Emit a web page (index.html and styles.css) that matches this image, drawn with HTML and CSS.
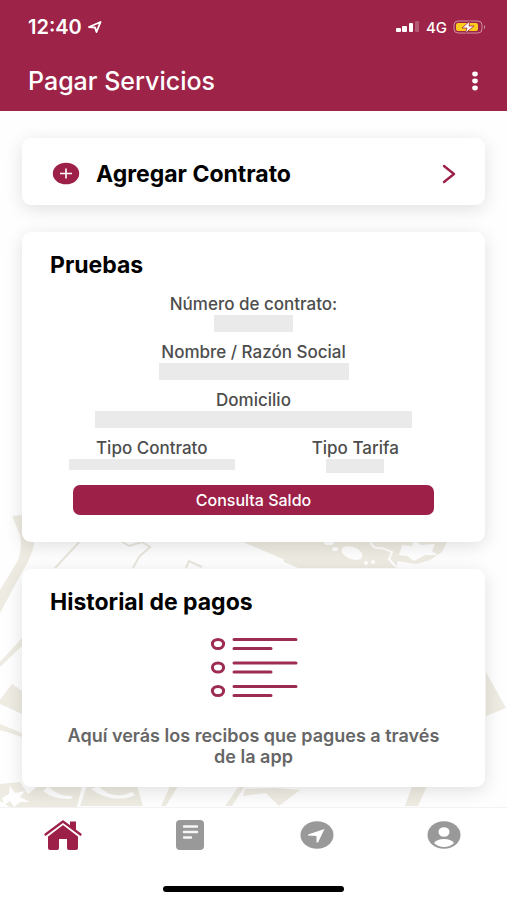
FILE: index.html
```html
<!DOCTYPE html>
<html lang="es">
  <head>
    <meta charset="utf-8">
    <meta name="viewport" content="width=device-width, initial-scale=1">
    <title>Pagar Servicios</title>
    <link rel="stylesheet" href="styles.css">
  </head>
  <body>
    <header class="header">
      <div class="status">
        <div class="status-side">
          <span class="time">12:40</span>
          <svg width="14" height="12" viewBox="0 0 14 12">
            <path d="M1 6 12.5 1 8.5 11 7 6.5Z" fill="none" stroke="#fff" stroke-width="1.9" stroke-linejoin="round"/>
          </svg>
        </div>
        <div class="status-side">
          <svg width="24" height="12" viewBox="0 0 24 12" fill="#fff">
            <rect x="0" y="7" width="5" height="4" rx="1"/>
            <rect x="6" y="5" width="5" height="6" rx="1"/>
            <rect x="13" y="2" width="4" height="9" rx="1"/>
            <rect x="19" y="0" width="4" height="11" rx="1" opacity=".25"/>
          </svg>
          <span class="network">4G</span>
          <svg width="34" height="14" viewBox="0 0 34 14">
            <rect x="1" y="1" width="28" height="12" rx="4" fill="none" stroke="#cf8fa3"/>
            <path d="M31 5q2.5 2 0 4Z" fill="#cf8fa3"/>
            <rect x="3" y="3" width="22" height="8" rx="2" fill="#fdcb1b"/>
            <path d="M17 1 9 8h5l-1.5 5L21 6h-5Z" fill="#fff" stroke="#9d2348" stroke-width=".8"/>
          </svg>
        </div>
      </div>
      <div class="title-bar">
        <h1>Pagar Servicios</h1>
        <button class="menu" type="button" aria-label="Menú">
          <svg width="8" height="20" viewBox="0 0 8 20" fill="#fff">
            <ellipse cx="4" cy="3" rx="2.8" ry="2.4"/>
            <ellipse cx="4" cy="10" rx="2.8" ry="2.4"/>
            <ellipse cx="4" cy="17" rx="2.8" ry="2.4"/>
          </svg>
        </button>
      </div>
    </header>

    <main class="main">
      <svg class="pattern" viewBox="0 0 507 293" preserveAspectRatio="none" aria-hidden="true">
        <g fill="#eeebe2">
          <path d="M12 2 22 1 34 22Q36 36 22 58L0 99V76L17 48Q23 36 20 21Z"/>
          <path d="M238 26H448L442 38 430 46 416 50 398 47 396 54H298L284 48 283 45Z"/>
          <path d="M0 148 22 124V132L0 153Z"/>
          <path d="M0 186 12 170 22 177V200L0 190ZM0 210 22 219V223L0 216Z"/>
          <path d="M486 158 506 194 486 202Z"/>
          <path d="M0 270 20 268 28 280 38 272H82L77 293H10L0 287ZM87 272H137L143 292H80ZM170 272H178L166 292H161ZM239 272H245L232 292H225ZM245 275 274 274 300 276 288 285 279 292 266 279 243 282ZM412 272H427L418 292H405Z"/>
        </g>
        <g fill="none" stroke="#e9e6dd" stroke-width="2">
          <path d="M81 26 70 38 55 54M121 27 129 32 142 28 150 33 139 43 133 54M186 54 189 47 202 53"/>
        </g>
        <g fill="#fff">
          <ellipse cx="352" cy="39" rx="11" ry="6" transform="rotate(20 352 39)"/>
          <ellipse cx="329" cy="29" rx="5" ry="2"/>
          <ellipse cx="335" cy="35" rx="3" ry="2"/>
          <circle cx="366" cy="49" r="2"/>
          <circle cx="373" cy="48" r="2"/>
          <path d="M402 31 412 32 414 26 421 31 435 30 432 37 438 41 425 41 414 47 407 42 399 41Z"/>
          <path d="M2 284 9 280 10 272 15 279 25 277 20 283 30 288 20 288 14 293 10 287 4 291Z"/>
          <path d="M48 272Q58 283 73 282L71 285Q54 286 43 277ZM98 272Q113 287 132 278L135 281Q113 291 91 275Z"/>
        </g>
        <path d="M370 26Q372 36 382 34L392 38 389 45 396 53" fill="none" stroke="#fff" stroke-width="2"/>
      </svg>

      <button class="card add" type="button">
        <svg width="28" height="23" viewBox="0 0 28 23">
          <ellipse cx="14" cy="11.5" rx="13.2" ry="10.8" fill="#9d2048"/>
          <path d="M8 11.5h12M14 6.5v10" stroke="#fff" stroke-width="1.6"/>
        </svg>
        <span class="heading">Agregar Contrato</span>
        <svg class="chevron" width="14" height="20" viewBox="0 0 14 20">
          <path d="m2 2 10 8-10 8" fill="none" stroke="#9d2048" stroke-width="2.4" stroke-linecap="round" stroke-linejoin="round"/>
        </svg>
      </button>

      <section class="card contract">
        <h2 class="heading">Pruebas</h2>
        <dl class="fields">
          <div class="field">
            <dt>Número de contrato:</dt>
            <dd class="mask number"></dd>
          </div>
          <div class="field">
            <dt>Nombre / Razón Social</dt>
            <dd class="mask name"></dd>
          </div>
          <div class="field">
            <dt>Domicilio</dt>
            <dd class="mask address"></dd>
          </div>
          <div class="field-row">
            <div class="field">
              <dt>Tipo Contrato</dt>
              <dd class="mask type"></dd>
            </div>
            <div class="field">
              <dt>Tipo Tarifa</dt>
              <dd class="mask rate"></dd>
            </div>
          </div>
        </dl>
        <button class="balance" type="button">Consulta Saldo</button>
      </section>

      <section class="card history">
        <h2 class="heading">Historial de pagos</h2>
        <svg class="list-icon" width="88" height="62" viewBox="0 0 88 62" fill="none" stroke="#9d2c52" stroke-width="3" stroke-linecap="round">
          <ellipse cx="8" cy="8" rx="5.6" ry="4.6"/>
          <path d="M24 3.5h62M24 12.5h37"/>
          <ellipse cx="8" cy="31.5" rx="5.6" ry="4.6"/>
          <path d="M24 27h62M24 36h37"/>
          <ellipse cx="8" cy="55" rx="5.6" ry="4.6"/>
          <path d="M24 50.5h62M24 59.5h37"/>
        </svg>
        <p>Aquí verás los recibos que pagues a través de la app</p>
      </section>
    </main>

    <nav class="nav">
      <a href="#inicio" aria-label="Inicio">
        <svg width="38" height="30" viewBox="0 0 38 30">
          <path d="M26 1.5h6V13l-6-5Z" fill="#9d2048"/>
          <path d="M4 15 19 4l15 11v13q0 2-2 2h-7q-2 0-2-2v-9h-8v9q0 2-2 2H6q-2 0-2-2Z" fill="#9d2048"/>
          <path d="M2 16.5 19 3.5 36 16.5" fill="none" stroke="#fff" stroke-width="2.5"/>
          <path d="M1.5 14.5 19 1.5l17.5 13" fill="none" stroke="#9d2048" stroke-width="2.2" stroke-linecap="round" stroke-linejoin="round"/>
        </svg>
      </a>
      <a href="#recibos" aria-label="Recibos">
        <svg width="28" height="30" viewBox="0 0 28 30">
          <rect width="28" height="30" rx="4" fill="#999"/>
          <path d="M8 6.5h13M8 12h13M8 17.5h7" stroke="#f6f6f6" stroke-width="2.4" stroke-linecap="round"/>
        </svg>
      </a>
      <a href="#ubicacion" aria-label="Ubicación">
        <svg width="34" height="28" viewBox="0 0 34 28">
          <ellipse cx="17" cy="14" rx="16.5" ry="13.8" fill="#999"/>
          <path d="M8 13.5 24.5 8 18 21.5h-1.5V15L8 14.5Z" fill="#fff"/>
        </svg>
      </a>
      <a href="#perfil" aria-label="Perfil">
        <svg width="34" height="28" viewBox="0 0 34 28">
          <ellipse cx="17" cy="14" rx="16.5" ry="13.8" fill="#999"/>
          <ellipse cx="17" cy="11" rx="5.5" ry="4.8" fill="#fff"/>
          <path d="M7 22q3-4 10-4t10 4q-4 4-10 4T7 22Z" fill="#fff"/>
        </svg>
      </a>
      <div class="home-bar"></div>
    </nav>
  </body>
</html>
```
FILE: styles.css
```css
* {
  box-sizing: border-box;
}
body {
  margin: 0;
  min-height: 100vh;
  display: flex;
  flex-direction: column;
  background: #fefefe;
  font-family: Inter, "Liberation Sans", sans-serif;
  color: #000;
}
h1, h2, p, dl, dd {
  margin: 0;
}
button {
  border: 0;
  font-family: inherit;
  cursor: pointer;
}
svg {
  display: block;
  flex: none;
}

.header {
  padding: 14px 20px 6px 28px;
  background: #9d2348;
  color: #fff;
}
.status, .title-bar, .status-side {
  display: flex;
  align-items: center;
  justify-content: space-between;
}
.status {
  height: 26px;
}
.status-side {
  gap: 6px;
}
.time {
  font-size: 20px;
  font-weight: 600;
}
.network {
  font-size: 15px;
  font-weight: 500;
}
.title-bar {
  height: 48px;
  margin-top: 17px;
}
.title-bar h1 {
  font-size: 25px;
  font-weight: 500;
}
.menu {
  padding: 8px;
  background: none;
}

.main {
  position: relative;
  flex: 1;
  display: flex;
  flex-direction: column;
  gap: 27px;
  padding: 27px 22px 20px;
}
.pattern {
  position: absolute;
  left: 0;
  bottom: 0;
  width: 100%;
  height: 293px;
}
.card {
  position: relative;
  border-radius: 9px;
  background: #fff;
  box-shadow: 0 4px 18px rgba(0, 0, 0, 0.12);
}
.heading {
  font-size: 23px;
  font-weight: 700;
  line-height: 28px;
}
.add {
  display: flex;
  align-items: center;
  gap: 16px;
  height: 67px;
  padding: 4px 29px 0 30px;
  text-align: left;
  color: #000;
}
.chevron {
  margin-left: auto;
}

.contract {
  padding: 19px 28px 27px;
}
.fields {
  margin-top: 14px;
  color: #4d4d4d;
  font-size: 17px;
  font-weight: 500;
  line-height: 22px;
  text-align: center;
}
.field {
  height: 48px;
}
.mask {
  height: 17px;
  margin: 0 auto;
  background: #eaeaea;
}
.number {
  width: 79px;
}
.name {
  width: 190px;
}
.address {
  width: 317px;
}
.type {
  width: 166px;
  height: 11px;
}
.rate {
  width: 58px;
  height: 14px;
}
.field-row {
  display: grid;
  grid-template-columns: 1fr 1fr;
}
.balance {
  display: block;
  width: calc(100% - 46px);
  height: 30px;
  margin: 0 auto;
  border-radius: 7px;
  background: #9d2048;
  color: #fff;
  font-size: 16px;
  font-weight: 500;
}

.history {
  padding: 19px 28px 20px;
}
.list-icon {
  margin: 20px auto 27px;
}
.history p {
  padding: 0 8px;
  color: #666;
  font-size: 18px;
  font-weight: 600;
  line-height: 21px;
  text-align: center;
}

.nav {
  display: grid;
  grid-template-columns: repeat(4, 1fr);
  align-content: space-between;
  height: 93px;
  padding: 12px 0 8px;
  border-top: 1px solid #f3f3f3;
  background: #fff;
}
.nav a {
  display: flex;
  align-items: center;
  justify-content: center;
  height: 30px;
}
.home-bar {
  grid-column: 1 / -1;
  width: 181px;
  height: 6px;
  margin: 0 auto;
  border-radius: 3px;
  background: #000;
}
```
